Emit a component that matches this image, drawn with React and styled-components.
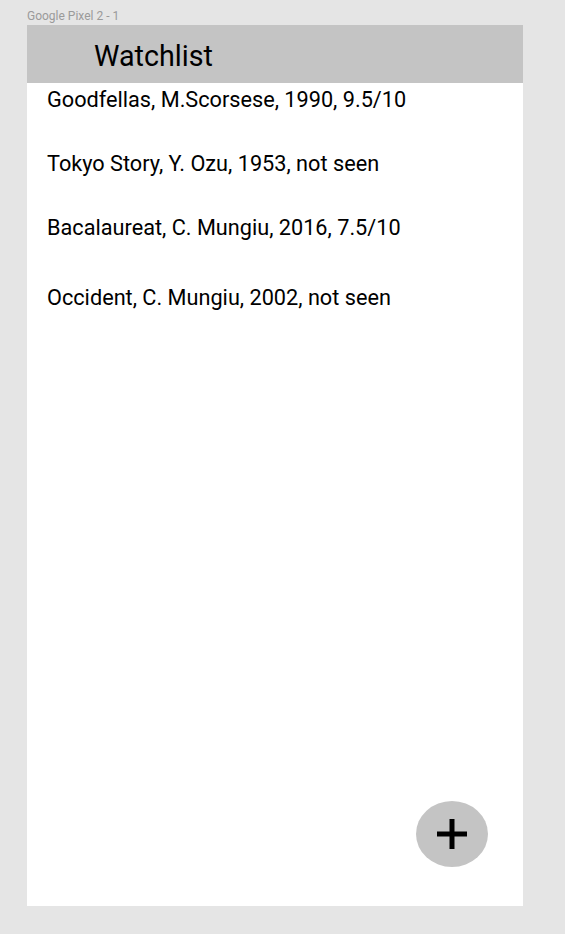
import React from "react";
import styled, { createGlobalStyle } from "styled-components";

const GlobalStyle = createGlobalStyle`
  body {
    margin: 0;
    background-color: #e5e5e5;
    font-family: Roboto, "Liberation Sans", sans-serif;
  }
`;

const Page = styled.div`
  width: 565px;
  height: 934px;
  padding: 9px 0 0 27px;
  box-sizing: border-box;
  background-color: #e5e5e5;
`;

const FrameLabel = styled.div`
  font-size: 12px;
  line-height: 14px;
  color: #9a9a9a;
  margin-bottom: 2px;
`;

const Frame = styled.div`
  position: relative;
  width: 496px;
  height: 881px;
  background-color: white;
  display: flex;
  flex-direction: column;
`;

const Header = styled.div`
  height: 58px;
  box-sizing: border-box;
  padding: 3px 0 0 67px;
  background-color: #c4c4c4;
  display: flex;
  align-items: center;
`;

const Title = styled.h1`
  margin: 0;
  font-size: 28.7px;
  font-weight: 400;
  color: black;
`;

const List = styled.ul`
  list-style: none;
  margin: 0;
  padding: 4px 0 0 20px;
`;

const Item = styled.li`
  font-size: 21.7px;
  line-height: 26px;
  color: black;
  margin-top: ${(props) => props.gap}px;
`;

const Fab = styled.button`
  position: absolute;
  right: 35px;
  bottom: 39px;
  width: 72px;
  height: 66px;
  border: none;
  border-radius: 50%;
  background-color: #c4c4c4;
  display: flex;
  align-items: center;
  justify-content: center;
  padding: 0;
`;

const movies = [
  { text: "Goodfellas, M.Scorsese, 1990, 9.5/10", gap: 0 },
  { text: "Tokyo Story, Y. Ozu, 1953, not seen", gap: 38 },
  { text: "Bacalaureat, C. Mungiu, 2016, 7.5/10", gap: 38 },
  { text: "Occident, C. Mungiu, 2002, not seen", gap: 44 },
];

const App = () => {
  return (
    <Page>
      <GlobalStyle />
      <FrameLabel>Google Pixel 2 - 1</FrameLabel>
      <Frame>
        <Header>
          <Title>Watchlist</Title>
        </Header>
        <List>
          {movies.map((m) => (
            <Item key={m.text} gap={m.gap}>
              {m.text}
            </Item>
          ))}
        </List>
        <Fab>
          <svg width="30" height="30" viewBox="0 0 30 30">
            <rect x="12.5" y="0" width="5" height="30" fill="black" />
            <rect x="0" y="12.5" width="30" height="5" fill="black" />
          </svg>
        </Fab>
      </Frame>
    </Page>
  );
};

export default App;
